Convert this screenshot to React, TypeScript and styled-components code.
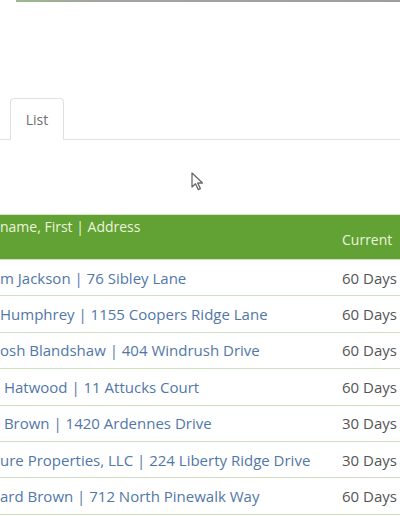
import { createGlobalStyle, styled } from 'styled-components';

const rows = [
  { name: 'm Jackson | 76 Sibley Lane', days: '60 Days' },
  { name: 'Humphrey | 1155 Coopers Ridge Lane', days: '60 Days' },
  { name: 'osh Blandshaw | 404 Windrush Drive', days: '60 Days' },
  { name: ' Hatwood | 11 Attucks Court', days: '60 Days' },
  { name: ' Brown | 1420 Ardennes Drive', days: '30 Days' },
  { name: 'ure Properties, LLC | 224 Liberty Ridge Drive', days: '30 Days' },
  { name: 'ard Brown | 712 North Pinewalk Way', days: '60 Days' },
];

export default function App() {
  return (
    <Page>
      <GlobalStyle />
      <TopRule />
      <TabBar>
        <Tab>List</Tab>
      </TabBar>
      <Spacer>
        <Cursor width="13" height="19" viewBox="0 0 13 19">
          <path
            d="M1 1 L1 15 L4.5 11.8 L7.3 17.6 L9.4 16.6 L6.7 11 L11.5 11 Z"
            fill="#fff"
            stroke="#6a6a6a"
            strokeWidth="1.3"
            strokeLinejoin="round"
          />
        </Cursor>
      </Spacer>
      <Table>
        <HeadRow>
          <HeadCell>name, First | Address</HeadCell>
          <HeadCell $bottom>Current</HeadCell>
        </HeadRow>
        {rows.map((r) => (
          <Row key={r.name}>
            <NameCell>{r.name}</NameCell>
            <DaysCell>{r.days}</DaysCell>
          </Row>
        ))}
      </Table>
    </Page>
  );
}

const GlobalStyle = createGlobalStyle`
  html, body {
    margin: 0;
    padding: 0;
    background: #fff;
    overflow: hidden;
  }
  body {
    font-family: 'Open Sans', 'Noto Sans', sans-serif;
  }
`;

const Page = styled.div`
  width: 400px;
  height: 516px;
  overflow: hidden;
  display: flex;
  flex-direction: column;
`;

const TopRule = styled.div`
  height: 2px;
  margin-left: 16px;
  background: linear-gradient(to right, #9cb98a 0%, #a2a6a0 20%, #9d9d9d 100%);
`;

const TabBar = styled.div`
  display: flex;
  margin-top: 96px;
  padding-left: 10px;
  border-bottom: 1px solid #e2e2e2;
`;

const Tab = styled.div`
  width: 54px;
  height: 42px;
  box-sizing: border-box;
  margin-bottom: -1px;
  border: 1px solid #e0e0e0;
  border-bottom-color: #fff;
  border-radius: 4px 4px 0 0;
  background: #fff;
  display: flex;
  align-items: center;
  justify-content: center;
  font-size: 14px;
  color: #6f6f6f;
`;

const Spacer = styled.div`
  position: relative;
  height: 74px;
`;

const Cursor = styled.svg`
  position: absolute;
  left: 191px;
  top: 32px;
`;

const Table = styled.div`
  display: flex;
  flex-direction: column;
  border-top: 1px solid #d4e6c4;
`;

const HeadRow = styled.div`
  display: grid;
  grid-template-columns: 342px 1fr;
  height: 44px;
  background: #62a133;
  border-bottom: 1px solid #cfe1bd;
`;

const HeadCell = styled.div<{ $bottom?: boolean }>`
  font-size: 14px;
  color: #eaf5de;
  white-space: nowrap;
  overflow: hidden;
  align-self: ${({ $bottom }) => ($bottom ? 'end' : 'start')};
  padding: ${({ $bottom }) => ($bottom ? '0 0 10px 0' : '2px 0 0 0')};
`;

const Row = styled.div`
  display: grid;
  grid-template-columns: 342px 1fr;
  align-items: center;
  height: 36.4px;
  box-sizing: border-box;
  border-bottom: 1px solid #cfe1bd;
`;

const NameCell = styled.div`
  font-size: 15px;
  color: #5177a8;
  white-space: pre;
  overflow: hidden;
`;

const DaysCell = styled.div`
  font-size: 15px;
  color: #555;
  white-space: nowrap;
`;
